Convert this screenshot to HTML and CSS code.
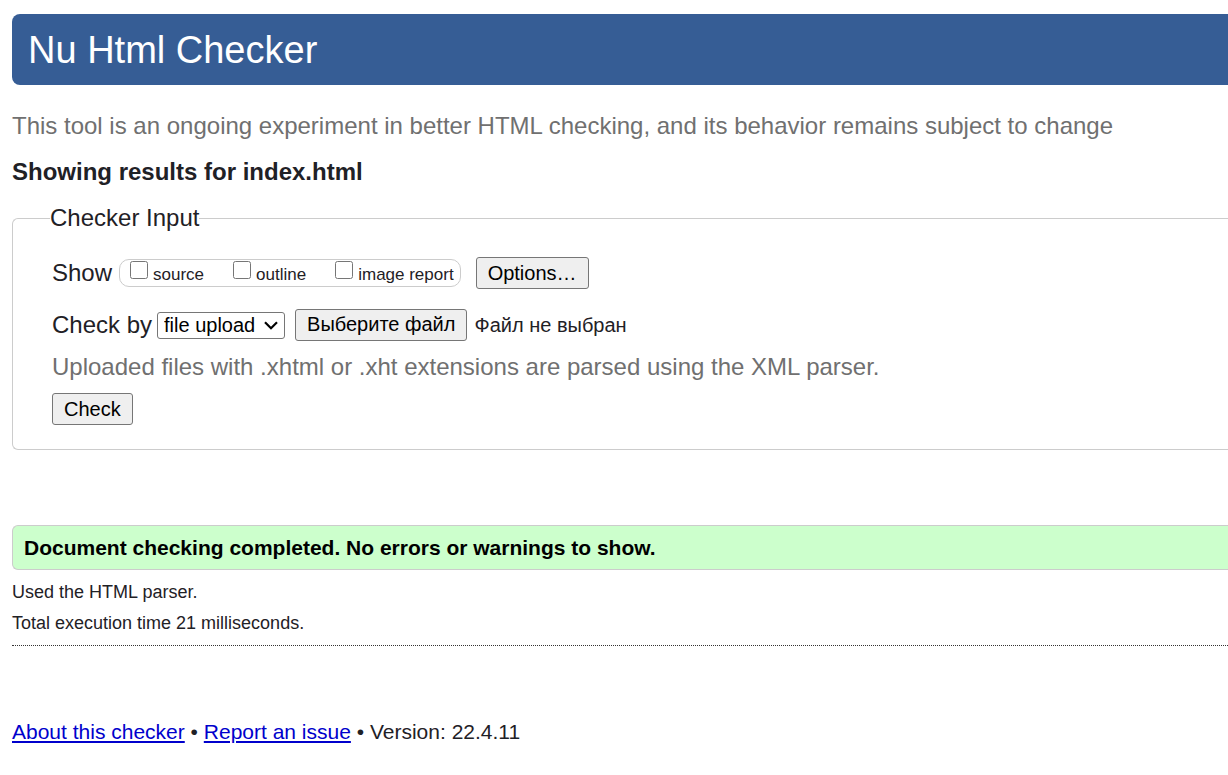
FILE: index.html
```html
<!DOCTYPE html>
<html lang="en">
<head>
<meta charset="utf-8">
<title>Showing results for index.html - Nu Html Checker</title>
<link rel="stylesheet" href="styles.css">
</head>
<body class="page">
<header class="banner"><h1 class="banner-title">Nu Html Checker</h1></header>
<main class="content">
<p class="tagline">This tool is an ongoing experiment in better HTML checking, and its behavior remains subject to change</p>
<h2 class="results-title">Showing results for index.html</h2>
<form>
<fieldset class="checker">
<legend class="checker-legend">Checker Input</legend>
<div class="row show-row">
<span>Show</span>
<div class="show-options">
<label class="option"><input class="tick" type="checkbox" name="showsource"><span>source</span></label>
<label class="option"><input class="tick" type="checkbox" name="showoutline"><span>outline</span></label>
<label class="option"><input class="tick" type="checkbox" name="showimagereport"><span>image report</span></label>
</div>
<button class="button" type="button">Options…</button>
</div>
<div class="row input-row">
<label for="docselect">Check by</label>
<div class="method">
<select class="method-select" id="docselect"><option>file upload</option><option>address</option><option>text input</option></select>
<svg class="method-arrow" width="14" height="9" viewBox="0 0 14 9" aria-hidden="true"><path d="M1 1.2 7 7.2 13 1.2" fill="none" stroke="#000" stroke-width="2.2"/></svg>
</div>
<label class="button" for="doc">Выберите файл</label>
<input class="file-input" id="doc" type="file">
<span class="file-status">Файл не выбран</span>
</div>
<p class="hint">Uploaded files with .xhtml or .xht extensions are parsed using the XML parser.</p>
<button class="button" type="submit">Check</button>
</fieldset>
</form>
<p class="success">Document checking completed. No errors or warnings to show.</p>
<div class="details">
<p>Used the HTML parser.</p>
<p>Total execution time 21 milliseconds.</p>
</div>
</main>
<footer class="footer"><a class="link" href="#about">About this checker</a> • <a class="link" href="#issues">Report an issue</a> • Version: 22.4.11</footer>
</body>
</html>
```
FILE: styles.css
```css
* { box-sizing: border-box; }

.page {
  margin: 0;
  padding: 14px 0 0 12px;
  font-family: "Liberation Sans", Arial, sans-serif;
  font-size: 24px;
  line-height: 28px;
  color: #1f2126;
  background: #fff;
}

.banner {
  padding: 14px 16px 13px;
  background: #365d95;
  border-radius: 8px 0 0 8px;
}

.banner-title {
  margin: 0;
  font-size: 38px;
  font-weight: 400;
  line-height: 44px;
  color: #fff;
}

.tagline {
  margin: 27px 0 18px;
  color: #707070;
}

.results-title {
  margin: 0 0 18px;
  font-size: 24px;
}

.checker {
  margin: 0 0 75px;
  padding: 25px 40px 24px 39px;
  border: 1px solid #ccc;
  border-right: 0;
  border-radius: 6px 0 0 6px;
}

.checker-legend {
  margin-left: -2px;
  padding: 0;
}

.row {
  display: flex;
  align-items: center;
}

.show-row { margin-bottom: 20px; }

.show-options {
  display: flex;
  gap: 29px;
  height: 28px;
  margin: 0 15px 0 7px;
  padding: 1px 6px 0 10px;
  border: 1px solid #ccc;
  border-radius: 10px;
}

.option {
  display: flex;
  gap: 5px;
  font-size: 17px;
}

.tick {
  width: 18px;
  height: 18px;
  margin: 0;
}

.button {
  height: 32px;
  padding: 0 11px;
  border: 1px solid #767676;
  border-radius: 3px;
  background: #efefef;
  color: #000;
  font-family: inherit;
  font-size: 20px;
  line-height: 28px;
}

.method {
  display: grid;
  align-items: center;
  margin: 0 10px 0 5px;
}

.method-select {
  grid-area: 1 / 1;
  appearance: none;
  height: 27px;
  padding: 0 28px 0 6px;
  border: 1px solid #767676;
  border-radius: 3px;
  background: #fff;
  color: #000;
  font-family: inherit;
  font-size: 20px;
}

.method-arrow {
  grid-area: 1 / 1;
  justify-self: end;
  margin-right: 7px;
  pointer-events: none;
}

.file-input {
  position: absolute;
  width: 1px;
  height: 1px;
  opacity: 0;
}

.file-status {
  margin-left: 7px;
  font-size: 20px;
}

.hint {
  margin: 12px 0;
  color: #707070;
}

.success {
  margin: 0 0 8px;
  padding: 8px 11px;
  border: 1px solid #ccc;
  border-right: 0;
  border-radius: 6px 0 0 6px;
  background: #cfc;
  color: #000;
  font-size: 21px;
  line-height: 27px;
  font-weight: 700;
}

.details {
  padding-bottom: 5px;
  border-bottom: 1px dotted #333;
  font-size: 18px;
}

.details p { margin: 0 0 3px; }

.footer {
  margin-top: 72px;
  font-size: 21px;
}

.link {
  color: #00c;
  text-decoration-thickness: 2px;
  text-underline-offset: 2px;
}
```
